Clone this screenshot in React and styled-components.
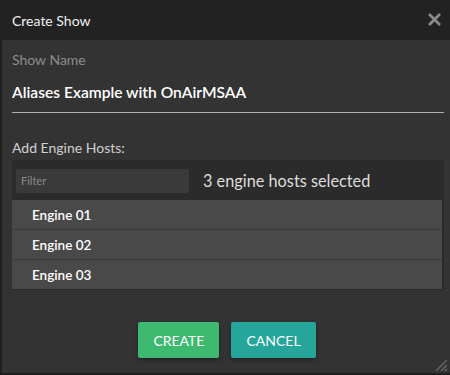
import React, { useState } from 'react'
import styled, { createGlobalStyle } from 'styled-components'

const GlobalStyle = createGlobalStyle`
  html, body {
    margin: 0;
    padding: 0;
    background: #1e1e1e;
  }
  * {
    box-sizing: border-box;
  }
`

const engines = ['Engine 01', 'Engine 02', 'Engine 03']

function App() {
    const [filter, setFilter] = useState('')

    return (
        <>
            <GlobalStyle />
            <Dialog>
                <Header>
                    <Title>Create Show</Title>
                    <Close aria-label="close">
                        <svg width="15" height="15" viewBox="0 0 15 15">
                            <path d="M2 2 L13 13 M13 2 L2 13" stroke="#8a8a8a" strokeWidth="2.8" />
                        </svg>
                    </Close>
                </Header>
                <Body>
                    <Label>Show Name</Label>
                    <NameInput defaultValue="Aliases Example with OnAirMSAA" />
                    <SectionLabel>Add Engine Hosts:</SectionLabel>
                    <HostPanel>
                        <HostBar>
                            <Filter
                                placeholder="Filter"
                                value={filter}
                                onChange={(e) => setFilter(e.target.value)}
                            />
                            <Selected>3 engine hosts selected</Selected>
                        </HostBar>
                        <HostList>
                            {engines.map((name) => (
                                <HostRow key={name}>{name}</HostRow>
                            ))}
                        </HostList>
                    </HostPanel>
                    <Actions>
                        <Button $color="#3dba6f">CREATE</Button>
                        <Button $color="#26a69a">CANCEL</Button>
                    </Actions>
                    <Grip>
                        <svg width="12" height="12" viewBox="0 0 12 12">
                            <path d="M1 12 L12 1 M6 12 L12 6 M10 12 L12 10" stroke="#6a6a6a" strokeWidth="1.4" />
                        </svg>
                    </Grip>
                </Body>
            </Dialog>
        </>
    )
}

export default App

const Dialog = styled.div`
    width: 450px;
    height: 375px;
    display: flex;
    flex-direction: column;
    background: #333333;
    border-left: 2px solid #1e1e1e;
    border-bottom: 2px solid #1e1e1e;
    font-family: Lato, "Open Sans", sans-serif;
`

const Header = styled.div`
    height: 40px;
    flex: none;
    display: flex;
    align-items: center;
    justify-content: space-between;
    padding: 0 8px 0 10px;
    background: #222222;
    margin-left: -2px;
`

const Title = styled.div`
    color: #f0f0f0;
    font-size: 14px;
    padding-left: 2px;
`

const Close = styled.div`
    width: 15px;
    height: 15px;
    display: flex;
    margin-top: -2px;
`

const Body = styled.div`
    position: relative;
    flex: 1;
    display: flex;
    flex-direction: column;
    padding: 11px 6px 0 10px;
`

const Label = styled.div`
    color: #8c8c8c;
    font-size: 14px;
    line-height: 17px;
`

const NameInput = styled.input`
    margin-top: 9px;
    height: 36px;
    background: transparent;
    border: none;
    border-bottom: 1px solid #b0b0b0;
    color: #ffffff;
    font-family: Lato, sans-serif;
    font-size: 15.6px;
    font-weight: 600;
    padding: 0 0 5px 0;
    outline: none;
`

const SectionLabel = styled.div`
    margin-top: 26px;
    color: #d0d0d0;
    font-size: 14px;
    line-height: 17px;
`

const HostPanel = styled.div`
    margin-top: 4px;
    display: flex;
    flex-direction: column;
    background: #2b2b2b;
`

const HostBar = styled.div`
    height: 40px;
    display: flex;
    align-items: center;
    padding: 1px 4px 0;
    gap: 14px;
`

const Filter = styled.input`
    width: 173px;
    height: 24px;
    background: #3a3a3a;
    border: none;
    border-radius: 2px;
    color: #ddd;
    font-family: Lato, sans-serif;
    font-size: 11px;
    padding: 0 5px;
    outline: none;

    &::placeholder {
        color: #8a8a8a;
    }
`

const Selected = styled.div`
    color: #dddddd;
    font-size: 16.3px;
`

const HostList = styled.div`
    display: flex;
    flex-direction: column;
    gap: 1px;
    background: #3a3a3a;
    margin-right: 2px;
    border-bottom: 1px solid #2b2b2b;
`

const HostRow = styled.div`
    height: 29px;
    display: flex;
    align-items: center;
    padding-left: 20px;
    background: #494949;
    color: #ffffff;
    font-size: 13.5px;
    font-weight: 600;
`

const Actions = styled.div`
    margin-top: 32px;
    display: flex;
    justify-content: center;
    gap: 12px;
    padding-right: 2px;
`

const Button = styled.button`
    height: 36px;
    padding: 0 15px;
    border: none;
    border-radius: 2px;
    background: ${(p) => p.$color};
    color: #ffffff;
    font-family: Lato, sans-serif;
    font-size: 14px;
    box-shadow: 0 2px 4px rgba(0, 0, 0, 0.35);
    cursor: pointer;
`

const Grip = styled.div`
    position: absolute;
    right: 3px;
    bottom: 2px;
    width: 12px;
    height: 12px;
    display: flex;
`
